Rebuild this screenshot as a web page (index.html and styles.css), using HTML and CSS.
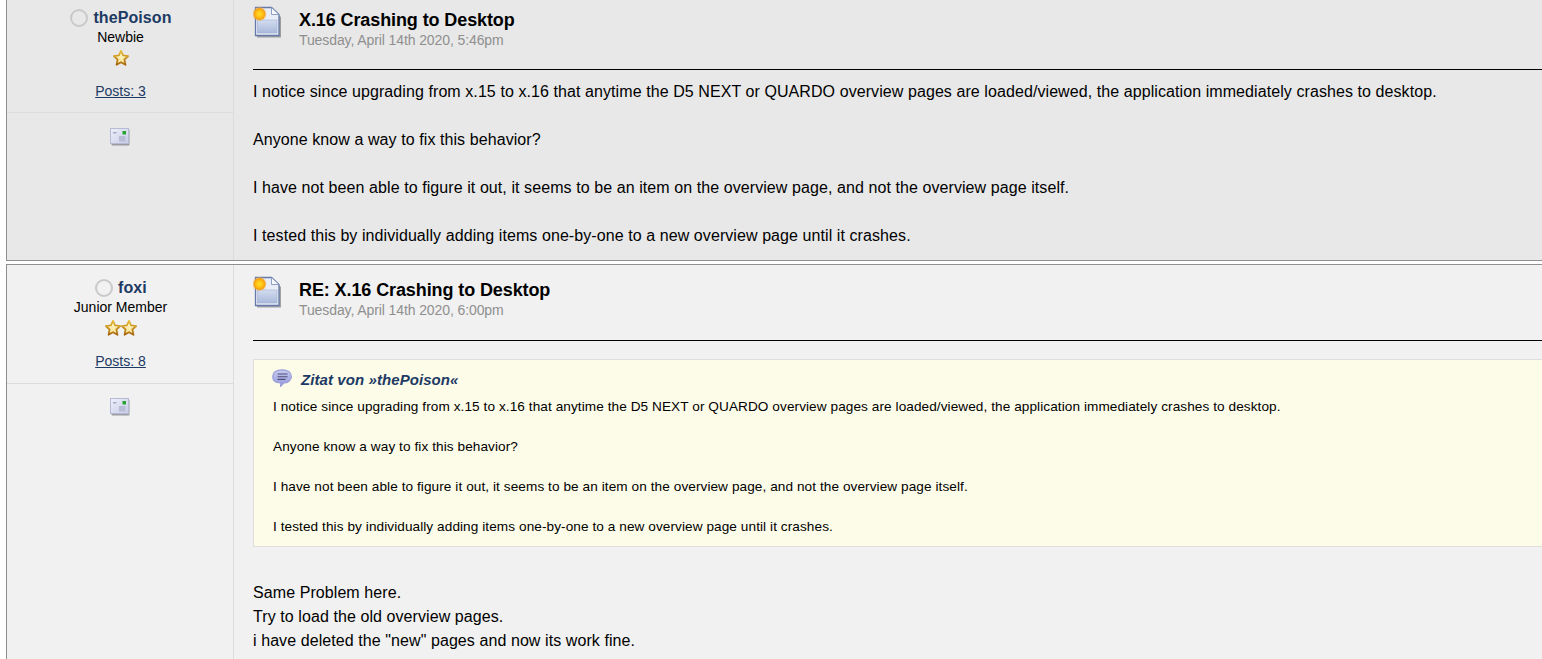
FILE: index.html
```html
<!DOCTYPE html>
<html lang="en">
<head>
<meta charset="utf-8">
<title>X.16 Crashing to Desktop</title>
<link rel="stylesheet" href="styles.css">
</head>
<body>
<svg class="defs" width="0" height="0" aria-hidden="true">
  <defs>
    <linearGradient id="g-panel" x1="0" y1="0" x2="0" y2="1"><stop offset="0" stop-color="#d3dcef"/><stop offset="1" stop-color="#a9b9db"/></linearGradient>
    <linearGradient id="g-star" x1="0" y1="0" x2="0" y2="1"><stop offset="0" stop-color="#fffbd8"/><stop offset="1" stop-color="#f8e08a"/></linearGradient>
    <linearGradient id="g-star-edge" x1="0" y1="0" x2="0" y2="1"><stop offset="0" stop-color="#e6bb34"/><stop offset="1" stop-color="#a8670c"/></linearGradient>
    <radialGradient id="g-dot" cx="0.5" cy="0.5" r="0.55"><stop offset="0" stop-color="#ffe02a"/><stop offset="0.6" stop-color="#fdb913"/><stop offset="1" stop-color="#f08a10"/></radialGradient>
    <linearGradient id="g-bubble" x1="0" y1="0" x2="0" y2="1"><stop offset="0" stop-color="#c9ccf0"/><stop offset="1" stop-color="#9297dc"/></linearGradient>
    <linearGradient id="g-mail" x1="0" y1="0" x2="1" y2="1"><stop offset="0" stop-color="#eff0fa"/><stop offset="1" stop-color="#c7cce6"/></linearGradient>
    <symbol id="i-doc" viewBox="0 0 30 32">
      <path d="M4 4H20L28 11V31.5H4Z" fill="#5c6068" opacity=".55"/>
      <path d="M2.5 1.5H18.5L26 8.5V29.5H2.5Z" fill="#e9edf7" stroke="#6679a6" stroke-width="1.3"/>
      <path d="M18.5 1.5V8.5H26Z" fill="#f8f9fd" stroke="#8296bf" stroke-width=".9"/>
      <rect x="4.5" y="14" width="19.5" height="13" fill="url(#g-panel)" stroke="#a0b0d2" stroke-width=".6"/>
      <circle cx="6.5" cy="8" r="7" fill="#f9b54a" opacity=".45"/>
      <circle cx="6.5" cy="8" r="6" fill="url(#g-dot)"/>
    </symbol>
    <symbol id="i-star" viewBox="0 0 16 16">
      <path d="M8 .8L10.1 5.4L15.2 6L11.4 9.5L12.5 14.8L8 12.2L3.5 14.8L4.6 9.5L.8 6L5.9 5.4Z" fill="url(#g-star)" stroke="url(#g-star-edge)" stroke-width="1.7" stroke-linejoin="round"/>
    </symbol>
    <symbol id="i-mail" viewBox="0 0 20 18">
      <rect x="1.5" y="1.5" width="18" height="16" rx="1" fill="#6f727a" opacity=".65"/>
      <rect x="0.5" y="0.5" width="18" height="15" fill="url(#g-mail)" stroke="#b6bad4"/>
      <rect x="3" y="4" width="3.5" height="1.5" fill="#a3abc8"/>
      <rect x="12.5" y="3" width="3.5" height="3.5" fill="#25a52e"/>
      <rect x="9" y="8" width="6.5" height="5.5" fill="#b8bdd6"/>
    </symbol>
    <symbol id="i-quote" viewBox="0 0 20 18">
      <path d="M10 .8C15.6 .8 19.4 3.4 19.4 7.4C19.4 11.6 15.6 14 11.8 14L8.6 17.4V14C4 13.8 .7 11.4 .7 7.4C.7 3.4 4.4 .8 10 .8Z" fill="url(#g-bubble)" stroke="#9da1d8" stroke-width="1.2"/>
      <path d="M5.6 5H15.6M5.6 7.7H15.6M5.6 10.4H13.5" stroke="#4f5278" stroke-width="1.1" fill="none"/>
    </symbol>
  </defs>
</svg>

<article class="post post-first">
  <aside class="author">
    <div class="author-main">
      <div class="author-name"><span class="status"></span><a class="name-link" href="#">thePoison</a></div>
      <div class="rank">Newbie</div>
      <div class="stars"><svg class="star"><use href="#i-star"/></svg></div>
      <a class="posts" href="#">Posts: 3</a>
    </div>
    <div class="author-tools"><svg class="mail"><use href="#i-mail"/></svg></div>
  </aside>
  <div class="content">
    <header class="head">
      <svg class="doc"><use href="#i-doc"/></svg>
      <div class="head-text">
        <h2 class="title">X.16 Crashing to Desktop</h2>
        <div class="date">Tuesday, April 14th 2020, 5:46pm</div>
      </div>
    </header>
    <div class="body">
      <p class="para">I notice since upgrading from x.15 to x.16 that anytime the D5 NEXT or QUARDO overview pages are loaded/viewed, the application immediately crashes to desktop.</p>
      <p class="para">Anyone know a way to fix this behavior?</p>
      <p class="para">I have not been able to figure it out, it seems to be an item on the overview page, and not the overview page itself.</p>
      <p class="para">I tested this by individually adding items one-by-one to a new overview page until it crashes.</p>
    </div>
  </div>
</article>

<article class="post post-second">
  <aside class="author">
    <div class="author-main">
      <div class="author-name"><span class="status"></span><a class="name-link" href="#">foxi</a></div>
      <div class="rank">Junior Member</div>
      <div class="stars"><svg class="star"><use href="#i-star"/></svg><svg class="star"><use href="#i-star"/></svg></div>
      <a class="posts" href="#">Posts: 8</a>
    </div>
    <div class="author-tools"><svg class="mail"><use href="#i-mail"/></svg></div>
  </aside>
  <div class="content">
    <header class="head">
      <svg class="doc"><use href="#i-doc"/></svg>
      <div class="head-text">
        <h2 class="title">RE: X.16 Crashing to Desktop</h2>
        <div class="date">Tuesday, April 14th 2020, 6:00pm</div>
      </div>
    </header>
    <div class="body">
      <blockquote class="quote">
        <div class="quote-head"><svg class="quote-icon"><use href="#i-quote"/></svg><span class="quote-from">Zitat von »thePoison«</span></div>
        <p class="quote-para">I notice since upgrading from x.15 to x.16 that anytime the D5 NEXT or QUARDO overview pages are loaded/viewed, the application immediately crashes to desktop.</p>
        <p class="quote-para">Anyone know a way to fix this behavior?</p>
        <p class="quote-para">I have not been able to figure it out, it seems to be an item on the overview page, and not the overview page itself.</p>
        <p class="quote-para">I tested this by individually adding items one-by-one to a new overview page until it crashes.</p>
      </blockquote>
      <div class="reply">Same Problem here.<br>Try to load the old overview pages.<br>i have deleted the "new" pages and now its work fine.</div>
    </div>
  </div>
</article>
</body>
</html>
```

FILE: styles.css
```css
html {
  height: 659px;
  overflow: hidden;
}
body {
  margin: 0;
  height: 659px;
  overflow: hidden;
  background: #fff;
  font-family: "Liberation Sans", Arial, sans-serif;
  font-size: 16px;
  line-height: 24px;
  color: #000;
}
.defs {
  position: absolute;
}
.post {
  display: flex;
  width: 1700px;
  margin-left: 6px;
  border: 1px solid #8f8f8f;
  box-sizing: border-box;
}
.post-first {
  margin-top: -6.4px;
  height: 267.4px;
  background: #e8e8e8;
  margin-bottom: 3px;
}
.post-second {
  height: 600px;
  background: #f1f1f1;
}
.author {
  flex: 0 0 227px;
  box-sizing: border-box;
  border-right: 1px solid #dcdcdc;
  text-align: center;
}
.author-main {
  height: 118.6px;
  padding-top: 11px;
  box-sizing: border-box;
  border-bottom: 1px solid #dcdcdc;
}
.author-name {
  display: flex;
  justify-content: center;
  align-items: center;
  gap: 5px;
  height: 24px;
  padding-left: 2px;
  font-size: 16px;
  font-weight: 700;
  letter-spacing: .1px;
}
.name-link {
  color: #1c3a63;
  text-decoration: none;
}
.status {
  width: 18px;
  height: 18px;
  box-sizing: border-box;
  border: 2px solid #c9c9c9;
  border-radius: 50%;
}
.rank {
  padding-left: 1px;
  font-size: 14px;
  line-height: 16px;
  margin-top: -1px;
  color: #000;
}
.stars {
  display: flex;
  justify-content: center;
  height: 16px;
  margin-top: 5px;
  padding-left: 2px;
}
.star {
  width: 16px;
  height: 16px;
}
.posts {
  display: block;
  margin-top: 17px;
  padding-left: 1px;
  font-size: 14px;
  line-height: 16px;
  color: #1c3a63;
  text-decoration: underline;
  text-decoration-skip-ink: none;
}
.author-tools {
  padding-top: 14.8px;
}
.mail {
  display: block;
  width: 20px;
  height: 18px;
  margin: 0 auto;
}
.content {
  flex: 1;
  padding: 0 0 0 19px;
}
.head {
  display: flex;
  align-items: flex-start;
  height: 75.6px;
  box-sizing: border-box;
  padding-top: 11px;
  border-bottom: 1px solid #000;
}
.doc {
  flex: none;
  width: 30px;
  height: 32px;
  margin-right: 16px;
}
.head-text {
  padding-top: 3px;
}
.title {
  margin: 0;
  font-size: 18px;
  line-height: 22px;
  font-weight: 700;
  letter-spacing: -.1px;
}
.date {
  font-size: 14px;
  line-height: 18px;
  color: #8f8f8f;
  letter-spacing: -.1px;
}
.body {
  padding-top: 9.8px;
  letter-spacing: .08px;
}
.para {
  margin: 0 0 24px;
}
.quote {
  margin: 8.6px 0 0;
  height: 188px;
  box-sizing: border-box;
  padding: 9px 19px;
  background: #fdfce9;
  border: 1px solid #dedede;
  font-size: 13.6px;
  line-height: 20px;
}
.quote-head {
  display: flex;
  align-items: center;
  height: 22px;
  margin-bottom: 6px;
}
.quote-icon {
  flex: none;
  align-self: flex-start;
  width: 20px;
  height: 18px;
  margin-left: -1px;
  margin-right: 9px;
}
.quote-from {
  font-size: 15px;
  font-weight: 700;
  font-style: italic;
  color: #1c3a63;
}
.quote-para {
  margin: 0 0 20px;
}
.reply {
  margin-top: 34px;
}
```
